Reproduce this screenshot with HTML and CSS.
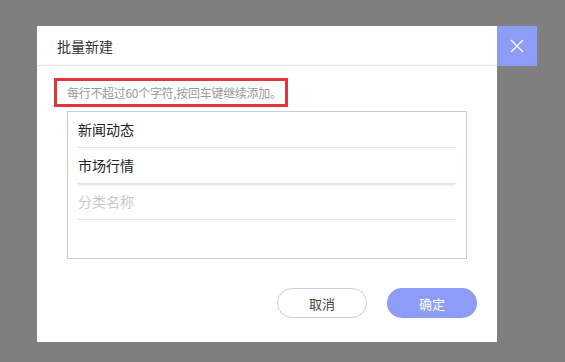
FILE: index.html
```html
<!DOCTYPE html>
<html lang="zh">

<head>
    <meta charset="utf-8">
    <title>批量新建</title>
    <link rel="stylesheet" href="styles.css">
</head>

<body>

    <div class="wrap">
        <section class="dialog">
            <header class="dialog-head">
                <h1>批量新建</h1>
            </header>

            <div class="dialog-body">
                <p class="tip">每行不超过60个字符,按回车键继续添加。</p>

                <div class="lines">
                    <div class="line">新闻动态</div>
                    <div class="line aktiv">市场行情</div>
                    <div class="line tom">分类名称</div>
                </div>
            </div>

            <footer class="dialog-foot">
                <button class="knap annuller">取消</button>
                <button class="knap ok">确定</button>
            </footer>
        </section>

        <button class="luk" aria-label="关闭">
            <svg width="14" height="14" viewBox="0 0 14 14">
                <path d="M1 1 L13 13 M13 1 L1 13" stroke="#fff" stroke-width="1.3" fill="none" />
            </svg>
        </button>
    </div>

</body>

</html>
```

FILE: styles.css
```css
body {
    margin: 0;
    padding: 26px 0 0 37px;
    background-color: #7f7f7f;
    font-family: "Microsoft YaHei", "Noto Sans CJK SC", sans-serif;
    height: 100vh;
    box-sizing: border-box;
    overflow: hidden;
}

.wrap {
    display: flex;
    align-items: flex-start;
}

.dialog {
    width: 460px;
    height: 316px;
    background-color: white;
    display: flex;
    flex-direction: column;
}

.dialog-head {
    height: 39px;
    border-bottom: 1px solid #e3e3e3;
    display: flex;
    align-items: center;
    padding-left: 20px;
}

h1 {
    margin: 0;
    font-size: 14px;
    font-weight: normal;
    color: #333;
}

.dialog-body {
    padding: 12px 30px 0 30px;
}

.tip {
    display: inline-block;
    margin: 0 0 4px -13px;
    padding: 0 3px 0 10px;
    height: 23px;
    line-height: 23px;
    border: 3px solid #e3343c;
    font-size: 12px;
    letter-spacing: -0.3px;
    color: #999;
}

.lines {
    height: 146px;
    border: 1px solid #ccc;
    padding: 0 10px 0 9px;
}

.line {
    height: 35px;
    line-height: 35px;
    border-bottom: 1px solid #e2e2e2;
    font-size: 14px;
    color: #222;
    padding-left: 1px;
}

.aktiv {
    box-shadow: 0 2px 2px -1px rgba(0, 0, 0, 0.12);
}

.tom {
    color: #c8c8c8;
}

.dialog-foot {
    margin-top: auto;
    padding: 0 20px 24px 0;
    display: flex;
    justify-content: flex-end;
    gap: 20px;
}

.knap {
    width: 90px;
    height: 30px;
    border-radius: 15px;
    font-family: inherit;
    font-size: 13px;
    cursor: pointer;
}

.annuller {
    background-color: white;
    border: 1px solid #cfcfcf;
    color: #444;
}

.ok {
    background-color: #8c9cf7;
    border: none;
    color: white;
}

.luk {
    width: 40px;
    height: 40px;
    border: none;
    padding: 0;
    background-color: #8c9cf7;
    display: flex;
    align-items: center;
    justify-content: center;
    cursor: pointer;
}
```
